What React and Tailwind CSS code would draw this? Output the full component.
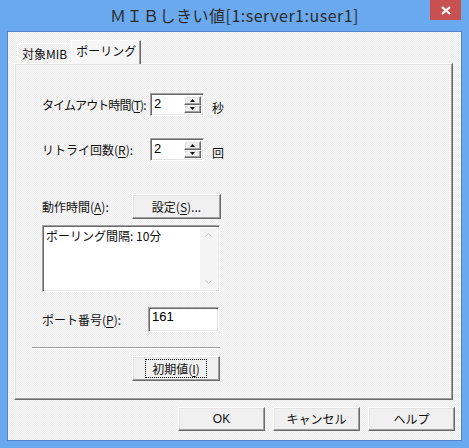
import { useState } from 'react'

const JP = 'font-["Meiryo_UI","Noto_Sans_CJK_JP",sans-serif]'
const RAISED = 'border border-t-white border-l-white border-b-[#696969] border-r-[#696969] shadow-[inset_-1px_-1px_#a0a0a0,inset_1px_1px_#e3e3e3] bg-[#f0f0f0]'
const SUNKEN = 'border border-t-[#a0a0a0] border-l-[#a0a0a0] border-b-white border-r-white shadow-[inset_1px_1px_#696969,inset_-1px_-1px_#e3e3e3] bg-white'
const CHECKER = 'bg-[repeating-conic-gradient(#ececec_0_25%,#f9f9f9_0_50%)] bg-[length:2px_2px]'

function Key({ children }) {
  return <span className="underline underline-offset-2">{children}</span>
}

function Btn({ children, className = '', focused }) {
  return (
    <button className={`${RAISED} flex items-center justify-center whitespace-nowrap text-[12px] text-[#111] ${className}`}>
      {focused
        ? <span className="border border-dotted border-black px-[6px] leading-[17px]">{children}</span>
        : children}
    </button>
  )
}

function Arrow({ up }) {
  return (
    <svg width="5" height="3" viewBox="0 0 5 3">
      <path d={up ? 'M2.5 0 L5 3 L0 3 Z' : 'M0 0 L5 0 L2.5 3 Z'} fill="#111" />
    </svg>
  )
}

function Spin({ value }) {
  return (
    <div className={`${SUNKEN} w-[54px] h-[23px] flex shrink-0`}>
      <span className="flex-1 pl-[3px] pt-[2px] text-[13px] leading-[15px] text-black font-['Liberation_Sans',sans-serif]">{value}</span>
      <div className="flex flex-col w-[17px] mt-[2px] mr-[2px] mb-[2px]">
        <div className={`${RAISED} flex-1 flex items-center justify-center`}><Arrow up /></div>
        <div className={`${RAISED} flex-1 flex items-center justify-center`}><Arrow /></div>
      </div>
    </div>
  )
}

export default function App() {
  const [tab] = useState('poll')

  return (
    <div className={`w-[469px] h-[448px] bg-[#6aa9ee] flex flex-col ${JP}`}>
      {/* title bar */}
      <div className="h-[31px] relative flex items-center justify-center">
        <span className="text-[16px] text-[#2b2b2b] tracking-[0.5px] -mt-[1px]">ＭＩＢしきい値[1:server1:user1]</span>
        <div className="absolute right-[8px] top-0 w-[31px] h-[20px] bg-[#c75050] flex items-center justify-center">
          <svg width="10" height="9" viewBox="0 0 10 9">
            <path d="M1 1 L9 8 M9 1 L1 8" stroke="white" strokeWidth="2.2" />
          </svg>
        </div>
      </div>

      {/* client */}
      <div className={`mx-[7px] h-[410px] border border-[#4f86c9] ${CHECKER} flex flex-col`}>
        {/* tabs */}
        <div className="flex items-end h-[31px] pl-[9px]">
          <div className={`h-[20px] px-[4px] border-t border-l border-t-white border-l-white text-[12px] text-[#111] leading-[19px] ${CHECKER}`}>
            対象MIB
          </div>
          <div className="h-[24px] px-[4px] -mb-[1px] border-t border-l border-r border-t-white border-l-white border-r-[#696969] shadow-[inset_-1px_0_#a0a0a0] text-[12px] text-[#111] leading-[20px] bg-[#f6f6f6] relative z-10">
            {tab === 'poll' && 'ポーリング'}
          </div>
        </div>

        {/* panel */}
        <div className={`ml-[6px] w-[439px] h-[337px] ${RAISED} ${CHECKER} flex flex-col pl-[27px] text-[12px] text-[#111] whitespace-nowrap`}>
          <div className="flex items-center mt-[29px] h-[23px]">
            <span className="w-[108px] shrink-0 tracking-[-0.9px]">タイムアウト時間(<Key>T</Key>):</span>
            <Spin value="2" />
            <span className="ml-[8px] mt-[6px]">秒</span>
          </div>
          <div className="flex items-center mt-[22px] h-[23px]">
            <span className="w-[108px] shrink-0">リトライ回数(<Key>R</Key>):</span>
            <Spin value="2" />
            <span className="ml-[8px] mt-[6px]">回</span>
          </div>

          <div className="flex items-center mt-[33px] h-[25px]">
            <span className="w-[90px]">動作時間(<Key>A</Key>):</span>
            <Btn className="w-[89px] h-[25px]">設定(<Key>S</Key>)...</Btn>
          </div>

          <div className={`${SUNKEN} mt-[6px] w-[178px] h-[67px] flex`}>
            <span className="flex-1 pl-[3px] pt-[2px] leading-[16px]">ポーリング間隔: 10分</span>
            <div className="w-[17px] flex flex-col justify-between items-center py-[5px] mr-[2px] mt-[2px] mb-[2px] bg-[#f4f4f4]">
              <svg width="7" height="4" viewBox="0 0 7 4"><path d="M0.5 3.5 L3.5 0.5 L6.5 3.5" stroke="#c4c4c4" fill="none" /></svg>
              <svg width="7" height="4" viewBox="0 0 7 4"><path d="M0.5 0.5 L3.5 3.5 L6.5 0.5" stroke="#c4c4c4" fill="none" /></svg>
            </div>
          </div>

          <div className="flex items-center mt-[15px] h-[25px]">
            <span className="w-[106px]">ポート番号(<Key>P</Key>):</span>
            <div className={`${SUNKEN} w-[71px] h-[25px] pl-[3px] pt-[1px] text-[13px] leading-[16px] text-black font-['Liberation_Sans',sans-serif]`}>161</div>
          </div>

          <div className="mt-[15px] -ml-[10px] w-[188px] h-[2px] border-t border-t-[#a0a0a0] border-b border-b-white" />

          <div className="flex mt-[7px] pl-[90px]">
            <Btn className="w-[88px] h-[25px]" focused>初期値(<Key>I</Key>)</Btn>
          </div>
        </div>

        {/* dialog buttons */}
        <div className="flex justify-end gap-[8px] mt-[7px] mr-[6px]">
          <Btn className="w-[87px] h-[24px] font-['Liberation_Sans','Noto_Sans_CJK_JP',sans-serif]">OK</Btn>
          <Btn className="w-[87px] h-[24px]">キャンセル</Btn>
          <Btn className="w-[87px] h-[24px]">ヘルプ</Btn>
        </div>
      </div>
    </div>
  )
}
